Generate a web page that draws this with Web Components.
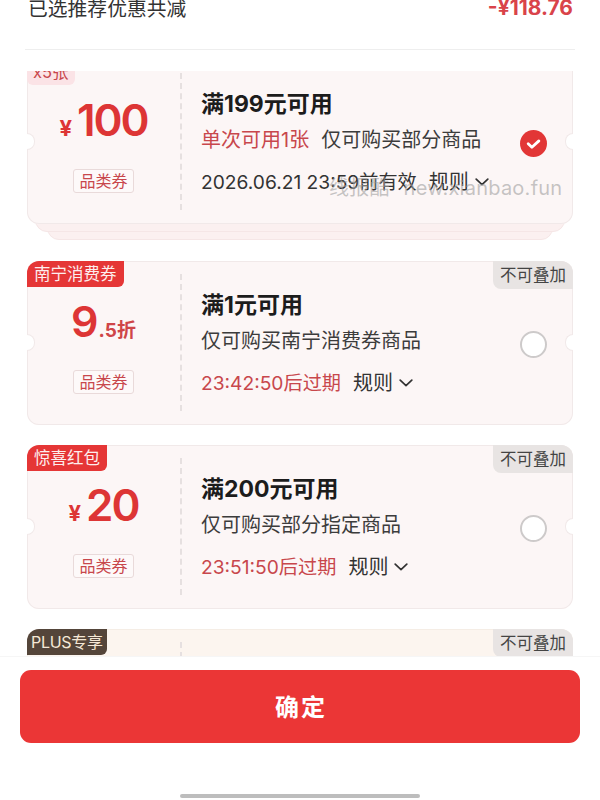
<!doctype html>
<html lang="zh">
<head>
<meta charset="utf-8">
<title>优惠券</title>
<style>
  html, body { margin: 0; padding: 0; background: #fff; }
  body { font-family: Inter, "Noto Sans CJK SC", sans-serif; }
</style>
</head>
<body>
<coupon-page>
  <saving-summary slot="summary" label="已选推荐优惠共减" amount="-¥118.76"></saving-summary>

  <coupon-card tag="x5张" tag-style="pale" stacked selected>
    <coupon-amount slot="amount" value="100"></coupon-amount>
    <span slot="title">满199元可用</span>
    <span slot="limit">单次可用1张</span>
    <span slot="scope">仅可购买部分商品</span>
    <span slot="expiry">2026.06.21 23:59前有效</span>
  </coupon-card>

  <coupon-card tag="南宁消费券" flag="不可叠加" urgent>
    <coupon-amount slot="amount" kind="discount" value="9" rest=".5折"></coupon-amount>
    <span slot="title">满1元可用</span>
    <span slot="scope">仅可购买南宁消费券商品</span>
    <span slot="expiry">23:42:50后过期</span>
  </coupon-card>

  <coupon-card tag="惊喜红包" flag="不可叠加" urgent>
    <coupon-amount slot="amount" value="20"></coupon-amount>
    <span slot="title">满200元可用</span>
    <span slot="scope">仅可购买部分指定商品</span>
    <span slot="expiry">23:51:50后过期</span>
  </coupon-card>

  <coupon-card tag="PLUS专享" tag-style="plus" flag="不可叠加" tone="cream"></coupon-card>

  <confirm-bar slot="footer" label="确定"></confirm-bar>
</coupon-page>

<script>
  class CouponPage extends HTMLElement {
    connectedCallback() {
      if (this.shadowRoot) return;
      this.attachShadow({ mode: "open" }).innerHTML = `
        <style>
          :host {
            display: flex;
            flex-direction: column;
            position: relative;
            width: 600px;
            height: 800px;
            overflow: hidden;
            background: #fff;
          }
          .list {
            flex: 1;
            min-height: 0;
            overflow: hidden;
          }
          .rows {
            display: flex;
            flex-direction: column;
            gap: 20px;
            margin-top: -11px;
            padding: 0 27px;
          }
          .watermark {
            position: absolute;
            z-index: 5;
            left: 329px;
            top: 175px;
            font-size: 20px;
            line-height: 26px;
            word-spacing: 8px;
            letter-spacing: 0.25px;
            color: rgba(160, 160, 160, 0.6);
            white-space: nowrap;
            pointer-events: none;
          }
        </style>
        <slot name="summary"></slot>
        <div class="list"><div class="rows"><slot></slot></div></div>
        <slot name="footer"></slot>
        <div class="watermark">线报酷 new.xianbao.fun</div>
      `;
    }
  }

  class SavingSummary extends HTMLElement {
    connectedCallback() {
      if (this.shadowRoot) return;
      this.attachShadow({ mode: "open" }).innerHTML = `
        <style>
          :host {
            display: block;
            flex: 0 0 71px;
            height: 71px;
            padding: 0 25px;
            box-sizing: border-box;
          }
          .row {
            display: flex;
            justify-content: space-between;
            align-items: center;
            height: 30px;
            margin-top: -8px;
            padding: 0 2px 0 3px;
            font-size: 19.8px;
            color: #333;
          }
          b {
            font-size: 21px;
            font-weight: 700;
            color: #d9434a;
          }
          hr {
            margin: 27px 0 0;
            border: 0;
            border-top: 1px solid #eeeeee;
          }
        </style>
        <div class="row"><span>${this.getAttribute("label")}</span><b>${this.getAttribute("amount")}</b></div>
        <hr>
      `;
    }
  }

  class CouponAmount extends HTMLElement {
    connectedCallback() {
      if (this.shadowRoot) return;
      const value = this.getAttribute("value");
      const isDiscount = this.getAttribute("kind") === "discount";
      const inner = isDiscount
        ? `<span class="num small">${value}</span><span class="rest">${this.getAttribute("rest")}</span>`
        : `<span class="yen">¥</span><span class="num">${value}</span>`;
      this.attachShadow({ mode: "open" }).innerHTML = `
        <style>
          :host {
            display: flex;
            justify-content: center;
            align-items: baseline;
            height: 60px;
            line-height: 60px;
            color: #dd3535;
            font-weight: 600;
            white-space: nowrap;
          }
          .yen { font-size: 22px; font-weight: 700; margin-right: 5px; }
          .num { font-size: 44px; letter-spacing: -2px; }
          .num.small { font-size: 43px; letter-spacing: 0; }
          .rest { font-size: 19px; font-weight: 700; color: #cf4548; }
        </style>
        ${inner}
      `;
    }
  }

  class CouponCard extends HTMLElement {
    connectedCallback() {
      if (this.shadowRoot) return;
      const tag = this.getAttribute("tag");
      const tagStyle = this.getAttribute("tag-style") || "red";
      const flag = this.getAttribute("flag");
      const selected = this.hasAttribute("selected");
      const check = selected
        ? `<svg viewBox="0 0 27 27" width="27" height="27"><circle cx="13.5" cy="13.5" r="13.5" fill="#e23636"/><path d="M8.2 13.8l3.7 3.5 7-6.4" fill="none" stroke="#fff" stroke-width="2.8" stroke-linecap="round" stroke-linejoin="round"/></svg>`
        : `<span class="radio"></span>`;
      this.attachShadow({ mode: "open" }).innerHTML = `
        <style>
          :host {
            --card-bg: #fcf6f6;
            --card-line: #f1e9e9;
            display: block;
            position: relative;
            isolation: isolate;
            flex: none;
          }
          :host([tone="cream"]) { --card-bg: #fcf5ef; --card-line: #f5ede5; }
          :host([stacked]) { padding-bottom: 17px; }
          :host([stacked])::before, :host([stacked])::after {
            content: "";
            position: absolute;
            bottom: 9px;
            left: 8px;
            right: 8px;
            height: 40px;
            box-sizing: border-box;
            background: #fbf0f0;
            border: 1px solid #f5e6e6;
            border-radius: 0 0 12px 12px;
          }
          :host([stacked])::after { bottom: 1px; left: 20px; right: 20px; z-index: -1; }
          .card {
            position: relative;
            z-index: 1;
            display: flex;
            height: 164px;
            box-sizing: border-box;
            overflow: hidden;
            background: var(--card-bg);
            box-shadow: inset 0 0 0 1px var(--card-line);
            border-radius: 12px;
          }
          .left {
            flex: 0 0 153px;
            display: flex;
            flex-direction: column;
            align-items: center;
            padding-top: 30px;
            box-sizing: border-box;
          }
          .left ::slotted(coupon-amount) { width: 100%; }
          .kind {
            margin-top: 19px;
            width: 61px;
            height: 24px;
            box-sizing: border-box;
            border: 1px solid #e9dada;
            border-radius: 3px;
            background: #fdf9f9;
            color: #c8474c;
            font-size: 16px;
            line-height: 22px;
            text-align: center;
          }
          .cut {
            flex: none;
            margin: 13px 0 14px;
            border-left: 2px dashed #e6e0e0;
          }
          .main {
            flex: 1;
            min-width: 0;
            display: flex;
            flex-direction: column;
            padding: 30px 0 0 19px;
            white-space: nowrap;
          }
          .title { height: 28px; line-height: 28px; font-size: 23px; font-weight: 700; color: #1c1c1c; }
          .sub { margin-top: 8px; height: 28px; line-height: 28px; font-size: 20px; color: #3c3c3c; display: flex; }
          .sub ::slotted([slot="limit"]) { color: #c8474c; margin-right: 12px; }
          .line { margin-top: 14px; height: 28px; line-height: 28px; font-size: 19.2px; color: #333; display: flex; align-items: center; }
          :host([urgent]) .expiry { color: #c8474c; }
          .rules { margin-left: 12px; font-size: 20px; }
          .line svg { margin-left: 6px; }
          .pick {
            flex: none;
            width: 53px;
            display: flex;
            align-items: center;
            padding-top: 2px;
            box-sizing: border-box;
          }
          .radio {
            width: 27px;
            height: 27px;
            box-sizing: border-box;
            border: 2px solid #cdcaca;
            border-radius: 50%;
            background: #fff;
          }
          .tag {
            position: absolute;
            left: 0;
            top: 0;
            height: 26px;
            padding: 0 7px;
            line-height: 26px;
            font-size: 16.5px;
            white-space: nowrap;
            border-radius: 0 0 6px 0;
          }
          .tag.red { background: #e53636; color: #fdeeee; }
          .tag.plus { background: #54453a; color: #f5e8d6; padding: 0 4px; font-size: 16px; letter-spacing: -0.3px; }
          .tag.pale { background: #fbe3e6; color: #c8474c; padding: 0 6px; height: 25px; line-height: 24px; border-radius: 0 0 6px 6px; }
          .flag {
            position: absolute;
            right: 0;
            top: 0;
            width: 80px;
            height: 28px;
            line-height: 28px;
            text-align: center;
            font-size: 16.5px;
            color: #444;
            background: #e8e4e3;
            border-radius: 0 0 0 8px;
          }
          .notch {
            position: absolute;
            z-index: 2;
            top: 73px;
            width: 8px;
            height: 17px;
            box-sizing: border-box;
            background: #fff;
            border: 1px solid var(--card-line);
          }
          .notch.l { left: 0; border-left: 0; border-radius: 0 9px 9px 0; }
          .notch.r { right: 0; border-right: 0; border-radius: 9px 0 0 9px; }
        </style>
        <div class="card">
          <div class="left">
            <slot name="amount"></slot>
            <div class="kind">品类券</div>
          </div>
          <div class="cut"></div>
          <div class="main">
            <div class="title"><slot name="title"></slot></div>
            <div class="sub"><slot name="limit"></slot><slot name="scope"></slot></div>
            <div class="line">
              <span class="expiry"><slot name="expiry"></slot></span>
              <span class="rules">规则</span>
              <svg viewBox="0 0 14 8" width="14" height="8"><path d="M1.2 1.2L7 6.6l5.8-5.4" fill="none" stroke="#333" stroke-width="1.7" stroke-linecap="round" stroke-linejoin="round"/></svg>
            </div>
          </div>
          <div class="pick">${check}</div>
          <div class="tag ${tagStyle}">${tag}</div>
          ${flag ? `<div class="flag">${flag}</div>` : ""}
        </div>
        <span class="notch l"></span>
        <span class="notch r"></span>
      `;
    }
  }

  class ConfirmBar extends HTMLElement {
    connectedCallback() {
      if (this.shadowRoot) return;
      this.attachShadow({ mode: "open" }).innerHTML = `
        <style>
          :host {
            display: flex;
            flex-direction: column;
            flex: 0 0 144px;
            height: 144px;
            box-sizing: border-box;
            padding: 13px 20px 0;
            background: #fff;
            border-top: 1px solid #f6f6f6;
          }
          button {
            flex: none;
            height: 73px;
            padding: 0 0 3px 2px;
            border: 0;
            border-radius: 11px;
            background: #eb3636;
            color: #fff;
            font: 700 24px Inter, "Noto Sans CJK SC", sans-serif;
            letter-spacing: 2px;
          }
          .home {
            align-self: center;
            width: 240px;
            height: 4px;
            margin-top: 51px;
            border-radius: 3px;
            background: #bdbdbd;
          }
        </style>
        <button type="button">${this.getAttribute("label")}</button>
        <div class="home"></div>
      `;
    }
  }

  customElements.define("coupon-page", CouponPage);
  customElements.define("saving-summary", SavingSummary);
  customElements.define("coupon-amount", CouponAmount);
  customElements.define("coupon-card", CouponCard);
  customElements.define("confirm-bar", ConfirmBar);
</script>
</body>
</html>
